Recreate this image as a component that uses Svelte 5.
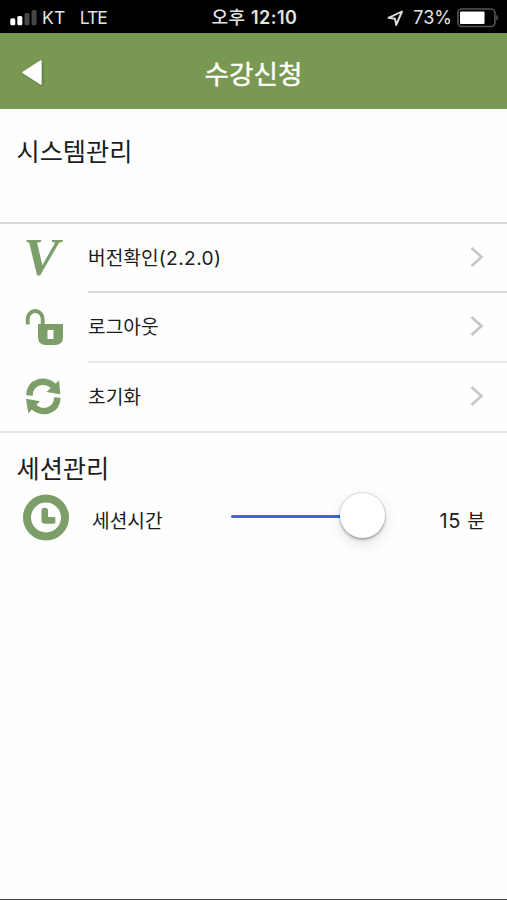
<script lang="ts">
    let minutes: number = 15
    let maxMinutes: number = 15

    const menu = [
        { id: "version", label: "버전확인", detail: "(2.2.0)" },
        { id: "logout", label: "로그아웃", detail: "" },
        { id: "reset", label: "초기화", detail: "" },
    ];
</script>

<div class="screen">
    <div class="status">
        <div class="carrier">
            <svg width="28" height="18" viewBox="0 0 28 18">
                <rect x="0.3" y="9.3" width="5" height="7" rx="1.5" fill="#fff" />
                <rect x="7.3" y="7" width="5" height="9.3" rx="1.5" fill="#fff" />
                <rect x="14.5" y="4" width="5" height="12.3" rx="1.5" fill="#454545" />
                <rect x="21.6" y="1" width="5" height="15.3" rx="1.5" fill="#454545" />
            </svg>
            <span class="name">KT</span>
            <span class="network">LTE</span>
        </div>
        <div class="clock">오후 <b>12:10</b></div>
        <div class="power">
            <svg width="17" height="17" viewBox="0 0 17 17">
                <path d="M15 1.5 L1.5 7.8 L8 8.7 L9.2 15 Z" fill="none" stroke="#ddd" stroke-width="1.9" stroke-linejoin="round" />
            </svg>
            <span class="percent">73%</span>
            <svg width="42" height="20" viewBox="0 0 42 20">
                <rect x="0.9" y="1" width="37" height="17.5" rx="4" fill="none" stroke="#555" stroke-width="1.6" />
                <rect x="3" y="3.5" width="24.5" height="12.5" rx="1" fill="#fff" />
                <path d="M39.5 6.5 Q42 9.7 39.5 13 Z" fill="#777" />
            </svg>
        </div>
    </div>

    <header>
        <button class="back" aria-label="뒤로">
            <svg width="22" height="26" viewBox="0 0 22 26">
                <path d="M2.2 12.5 L19.7 1.3 V23.7 Z" fill="#fff" stroke="#fff" stroke-width="2" stroke-linejoin="round" />
            </svg>
        </button>
        <h1>수강신청</h1>
    </header>

    <h2 class="system">시스템관리</h2>

    <ul>
        {#each menu as item}
            <li>
                <svg class="icon" width="50" height="50" viewBox="0 0 50 50">
                    {#if item.id === "version"}
                        <text x="5.3" y="40.5" textLength="36" lengthAdjust="spacingAndGlyphs" class="letter">V</text>
                    {:else if item.id === "logout"}
                        <path d="M9.7 21.5 V16 A7.5 8 0 0 1 24.7 16 V23" fill="none" stroke="#7c9e69" stroke-width="3.8" />
                        <path fill-rule="evenodd" d="M20 21 H45 V34 L38 42 H27 L20 34 Z" fill="#7c9e69" stroke="none" />
                        <path d="M20 30 V34 Q20 42 28 42 H37 Q45 42 45 34 V30 Z" fill="#7c9e69" />
                        <rect x="29.5" y="27" width="6" height="9" fill="#fefefe" />
                    {:else}
                        <path d="M11.4 23.5 C12 9.5 27 5.5 36.5 15" fill="none" stroke="#7c9e69" stroke-width="6.5" />
                        <path d="M41 8.5 L42.3 22.3 L28.5 20 Z" fill="#7c9e69" />
                        <path d="M39.4 25.5 C38.8 39.5 24 43 14.5 34" fill="none" stroke="#7c9e69" stroke-width="6.5" />
                        <path d="M10.3 41.3 L8 26.8 L22 29.3 Z" fill="#7c9e69" />
                    {/if}
                </svg>
                <div class="row">
                    <span class="label">{item.label}<span class="detail">{item.detail}</span></span>
                    <svg class="chevron" width="16" height="24" viewBox="0 0 16 24">
                        <path d="M2.5 3 L12.5 12 L2.5 21" fill="none" stroke="#c5c5c7" stroke-width="2.5" />
                    </svg>
                </div>
            </li>
        {/each}
    </ul>

    <h2 class="session">세션관리</h2>

    <div class="time">
        <svg width="48" height="48" viewBox="0 0 48 48">
            <circle cx="24" cy="23.5" r="19" fill="none" stroke="#7c9e69" stroke-width="8" />
            <path d="M22.7 17 V26.2 H30" fill="none" stroke="#7c9e69" stroke-width="6.5" stroke-linecap="round" stroke-linejoin="round" />
            <path d="M20.5 15 H25.9 V22.9 H33.2 V29.4 H22 Z" fill="#7c9e69" />
        </svg>
        <span class="timeLabel">세션시간</span>
        <div class="slider">
            <div class="track" style="width: {(minutes / maxMinutes) * 100}%"></div>
            <div class="thumb"></div>
        </div>
        <span class="value"><span class="number">{minutes}</span> 분</span>
    </div>
</div>

<style>
    :global(body) {
        margin: 0;
        background: #fefefe;
    }

    .screen {
        display: flex;
        flex-direction: column;
        box-sizing: border-box;
        width: 507px;
        height: 900px;
        overflow: hidden;
        border-bottom: 1px solid #464646;
        background: #fefefe;
        color: #1c1c1c;
        font-family: Inter, "Noto Sans CJK KR", sans-serif;
    }

    svg {
        display: block;
        flex: none;
    }

    .status {
        display: grid;
        grid-template-columns: 1fr auto 1fr;
        align-items: center;
        height: 33px;
        padding: 2px 8px 0 10px;
        box-sizing: border-box;
        background: #000;
        color: #e4e4e4;
        font-size: 17.5px;
        line-height: 30px;
    }

    .carrier,
    .power {
        display: flex;
        align-items: center;
    }

    .name {
        margin-left: 4px;
        letter-spacing: 0.3px;
    }

    .network {
        margin-left: 14px;
        letter-spacing: -0.9px;
    }

    .clock {
        font-size: 18px;
        font-weight: 500;
        letter-spacing: 0.5px;
        white-space: nowrap;
    }

    .clock b {
        font-weight: 600;
    }

    .power {
        justify-content: flex-end;
    }

    .power svg:first-child {
        margin-top: 1px;
    }

    .percent {
        margin: 0 5px 0 9px;
        font-size: 18px;
    }

    header {
        display: grid;
        grid-template-columns: 60px 1fr 60px;
        align-items: center;
        height: 76px;
        background: #799852;
    }

    .back {
        padding: 3px 0 0 21px;
        border: none;
        background: transparent;
    }

    .back svg {
        filter: drop-shadow(1px 1px 1px #52703a);
    }

    h1 {
        margin: 6px 0 0;
        color: #fff;
        font-size: 26.6px;
        font-weight: 400;
        line-height: 40px;
        text-align: center;
        -webkit-text-stroke: 0.4px #fff;
    }

    h2 {
        margin: 0;
        padding-left: 16.5px;
        font-size: 25.2px;
        font-weight: 400;
        line-height: 36px;
    }

    .system {
        height: 89px;
        padding-top: 24px;
        border-bottom: 2px solid #d8d8d8;
        line-height: 38px;
    }

    ul {
        margin: 0;
        padding: 0;
        list-style: none;
        border-bottom: 2px solid #e8e8e8;
    }

    li {
        display: flex;
        align-items: center;
        height: 69.5px;
        padding-left: 18px;
    }

    li:first-child {
        height: 69px;
    }

    li:last-child {
        height: 68px;
    }

    .icon {
        overflow: visible;
    }

    .letter {
        fill: #7c9e69;
        font-family: "Liberation Serif", serif;
        font-size: 52px;
        font-style: italic;
        font-weight: 700;
    }

    .row {
        display: flex;
        align-items: center;
        justify-content: space-between;
        flex: 1;
        height: 100%;
        box-sizing: border-box;
        margin-left: 20px;
        padding-right: 22px;
        border-bottom: 2px solid #dcdcdc;
    }

    li:nth-child(2) .row {
        border-color: #e8e8e8;
    }

    li:last-child .row {
        border: none;
    }

    .chevron {
        margin-top: -1px;
    }

    .label,
    .timeLabel,
    .value {
        font-size: 19.2px;
        line-height: 30px;
        white-space: nowrap;
    }

    .detail {
        letter-spacing: 0.4px;
    }

    .session {
        padding-top: 18px;
    }

    .time {
        display: flex;
        align-items: center;
        height: 60px;
        margin-top: 1px;
        padding: 0 22px;
    }

    .timeLabel {
        width: 139px;
        margin: 6px 0 0 22px;
    }

    .slider {
        display: flex;
        align-items: center;
        width: 154px;
        margin-top: -1px;
    }

    .track {
        height: 3px;
        margin-top: -1px;
        border-radius: 2px;
        background: #2a6fe3;
    }

    .thumb {
        flex: none;
        width: 45px;
        height: 45px;
        margin: -3px 0 0 -3px;
        border-radius: 50%;
        background: #fff;
        box-shadow: 0 0 1px 1px rgba(0, 0, 0, 0.1), 0 2px 3px rgba(0, 0, 0, 0.25), 0 5px 15px rgba(0, 0, 0, 0.12);
    }

    .value {
        flex: 1;
        margin-top: 6px;
        text-align: right;
    }

    .number {
        margin-right: 1px;
        font-size: 20px;
        letter-spacing: 0.6px;
    }
</style>
